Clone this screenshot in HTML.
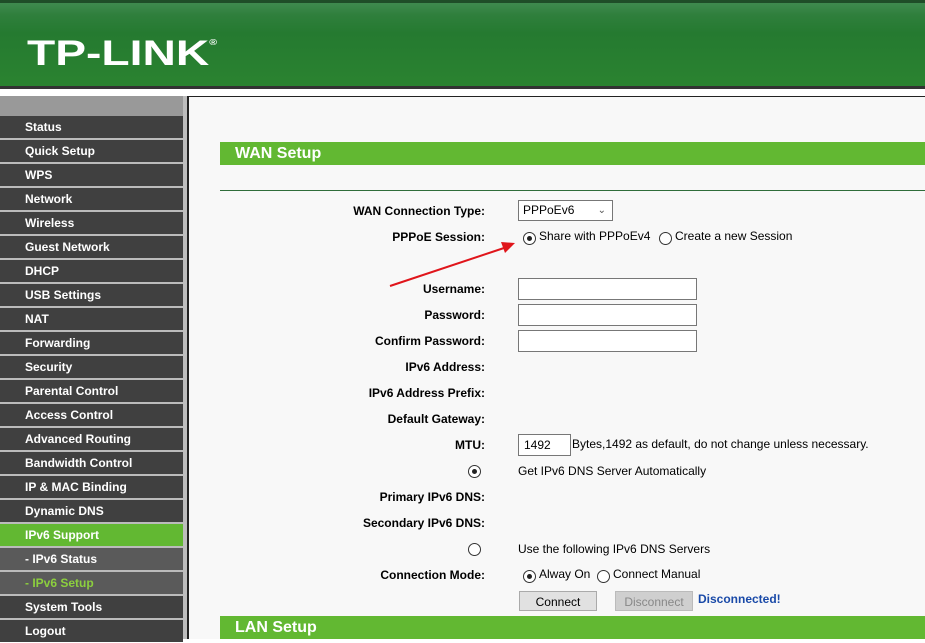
<!DOCTYPE html>
<html><head><style>
body{margin:0;width:925px;height:639px;overflow:hidden;background:#fff;font-family:"Liberation Sans",Arial,sans-serif;position:relative}
.hdr{position:absolute;left:0;top:0;width:925px;height:89px;background:linear-gradient(#3f8a4f 0,#2f7f3c 12px,#257a30 30px,#2b8430 89px);border-top:3px solid #1f4d28;box-sizing:border-box}
.hdr:after{content:"";position:absolute;left:0;right:0;bottom:0;height:3px;background:#333}
.logo{position:absolute;left:27px;top:31px;color:#fff;font-weight:bold;font-size:35px;letter-spacing:0px;transform:scaleX(1.32);transform-origin:left;font-family:"Liberation Sans",sans-serif}
.side{position:absolute;left:0;top:96px;width:183px;height:543px;background:#bbb}
.side .top{height:20px;background:#999}
.it{position:absolute;left:0;width:183px;height:22px;background:#404040;color:#fff;font-weight:bold;font-size:12px;line-height:23px;padding-left:25px;box-sizing:border-box}
.strip{position:absolute;left:183px;top:96px;width:4px;height:543px;background:#bdbdbd}
.bord{position:absolute;left:187px;top:96px;width:2px;height:543px;background:#222}
.cont{position:absolute;left:189px;top:96px;width:736px;height:543px;background:#f8f8f8;border-top:1px solid #222;box-sizing:border-box}
.bar{position:absolute;left:220px;width:705px;height:23px;background:#62b832;color:#fff;font-weight:bold;font-size:16px;line-height:23px;padding-left:15px;box-sizing:border-box}
.lbl{position:absolute;right:440px;font-size:12px;font-weight:bold;color:#000}
.t{position:absolute;font-size:12px;color:#000}
.in{position:absolute;left:518px;width:179px;height:22px;border:1px solid #777;background:#fff;box-sizing:border-box}
.rad{position:absolute;width:13px;height:13px;border:1px solid #333;border-radius:50%;background:#fff;box-sizing:border-box}
.rad.on:after{content:"";position:absolute;left:3px;top:3px;width:5px;height:5px;border-radius:50%;background:#222}
.btn{position:absolute;top:591px;height:20px;border:1px solid #aaa;background:#e1e1e1;font-size:12px;text-align:center;line-height:20px;box-sizing:border-box}
</style></head><body>
<div class="hdr"><div class="logo">TP-LINK<sup style="font-size:8px;vertical-align:top;position:relative;top:4px">®</sup></div></div>
<div class="side"><div class="top"></div></div>
<div class="it" style="top:116px">Status</div>
<div class="it" style="top:140px">Quick Setup</div>
<div class="it" style="top:164px">WPS</div>
<div class="it" style="top:188px">Network</div>
<div class="it" style="top:212px">Wireless</div>
<div class="it" style="top:236px">Guest Network</div>
<div class="it" style="top:260px">DHCP</div>
<div class="it" style="top:284px">USB Settings</div>
<div class="it" style="top:308px">NAT</div>
<div class="it" style="top:332px">Forwarding</div>
<div class="it" style="top:356px">Security</div>
<div class="it" style="top:380px">Parental Control</div>
<div class="it" style="top:404px">Access Control</div>
<div class="it" style="top:428px">Advanced Routing</div>
<div class="it" style="top:452px">Bandwidth Control</div>
<div class="it" style="top:476px">IP &amp; MAC Binding</div>
<div class="it" style="top:500px">Dynamic DNS</div>
<div class="it" style="top:524px;background:#62b832">IPv6 Support</div>
<div class="it" style="top:548px;background:#5a5a5a">- IPv6 Status</div>
<div class="it" style="top:572px;background:#5a5a5a;color:#8ccf3e">- IPv6 Setup</div>
<div class="it" style="top:596px">System Tools</div>
<div class="it" style="top:620px">Logout</div>
<div class="strip"></div><div class="bord"></div>
<div class="cont"></div>
<div class="bar" style="top:142px">WAN Setup</div>
<div style="position:absolute;left:220px;top:190px;width:705px;height:1px;background:#2f6d3a"></div>
<div class="lbl" style="top:204px">WAN Connection Type:</div>
<div style="position:absolute;left:518px;top:200px;width:95px;height:21px;border:1px solid #777;background:#fff;box-sizing:border-box;font-size:12px;line-height:19px;padding-left:4px">PPPoEv6<span style="position:absolute;right:6px;top:0;font-size:10px;color:#555">&#8964;</span></div>
<div class="lbl" style="top:230px">PPPoE Session:</div>
<div class="rad on" style="left:523px;top:232px"></div><div class="t" style="left:539px;top:229px">Share with PPPoEv4</div>
<div class="rad" style="left:659px;top:232px"></div><div class="t" style="left:675px;top:229px">Create a new Session</div>
<svg style="position:absolute;left:385px;top:238px" width="135" height="52"><line x1="5" y1="48" x2="122" y2="9" stroke="#e0151b" stroke-width="2"/><polygon points="130,5 116,4 120,15" fill="#e0151b"/></svg>
<div class="lbl" style="top:282px">Username:</div><div class="in" style="top:278px"></div>
<div class="lbl" style="top:308px">Password:</div><div class="in" style="top:304px"></div>
<div class="lbl" style="top:334px">Confirm Password:</div><div class="in" style="top:330px"></div>
<div class="lbl" style="top:360px">IPv6 Address:</div>
<div class="lbl" style="top:386px">IPv6 Address Prefix:</div>
<div class="lbl" style="top:412px">Default Gateway:</div>
<div class="lbl" style="top:438px">MTU:</div>
<div style="position:absolute;left:518px;top:434px;width:53px;height:22px;border:1px solid #777;background:#fff;box-sizing:border-box;font-size:12px;line-height:20px;padding-left:5px">1492</div>
<div class="t" style="left:572px;top:437px">Bytes,1492 as default, do not change unless necessary.</div>
<div class="rad on" style="left:468px;top:465px"></div><div class="t" style="left:518px;top:464px">Get IPv6 DNS Server Automatically</div>
<div class="lbl" style="top:490px">Primary IPv6 DNS:</div>
<div class="lbl" style="top:516px">Secondary IPv6 DNS:</div>
<div class="rad" style="left:468px;top:543px"></div><div class="t" style="left:518px;top:542px">Use the following IPv6 DNS Servers</div>
<div class="lbl" style="top:568px">Connection Mode:</div>
<div class="rad on" style="left:523px;top:570px"></div><div class="t" style="left:539px;top:567px">Alway On</div>
<div class="rad" style="left:597px;top:570px"></div><div class="t" style="left:613px;top:567px">Connect Manual</div>
<div class="btn" style="left:519px;width:78px">Connect</div>
<div class="btn" style="left:615px;width:78px;background:#cfcfcf;color:#888;border-color:#bbb">Disconnect</div>
<div class="t" style="left:698px;top:592px;color:#1a4aa8;font-weight:bold">Disconnected!</div>
<div class="bar" style="top:616px">LAN Setup</div>
</body></html>
